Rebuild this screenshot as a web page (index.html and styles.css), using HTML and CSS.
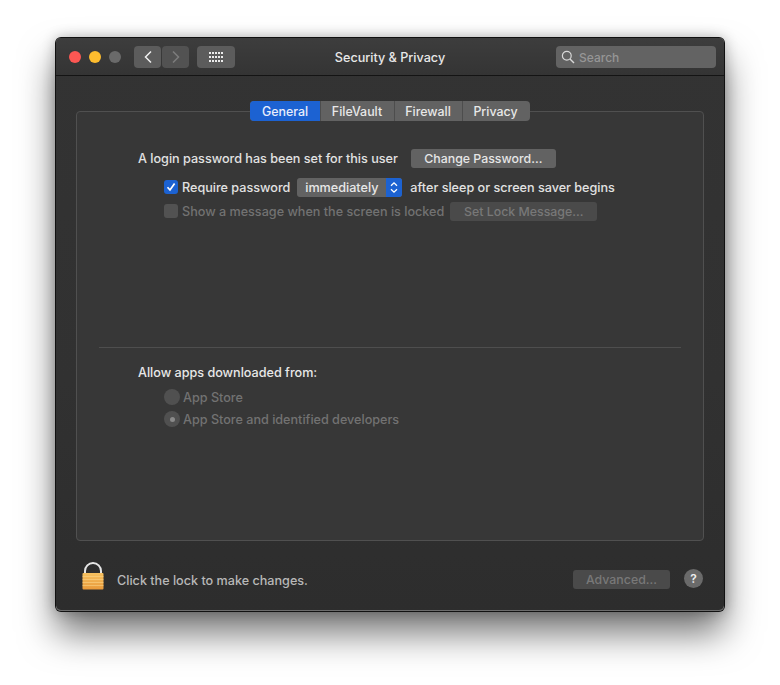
FILE: index.html
```html
<!DOCTYPE html>
<html lang="en">
<head>
<meta charset="utf-8">
<title>Security &amp; Privacy</title>
<link rel="stylesheet" href="styles.css">
</head>
<body>
<div class="window">
  <header class="titlebar">
    <div class="tools">
      <div class="lights"><span class="light red"></span><span class="light yellow"></span><span class="light grey"></span></div>
      <div class="nav">
        <span class="tool nav-btn"><svg width="10" height="14" viewBox="0 0 10 14"><path d="M8 1.5 2.5 7 8 12.5" fill="none" stroke="#f0f0f0" stroke-width="1.5"/></svg></span>
        <span class="tool nav-btn"><svg width="10" height="14" viewBox="0 0 10 14"><path d="M2 1.5 7.5 7 2 12.5" fill="none" stroke="#7d7d7d" stroke-width="1.5"/></svg></span>
      </div>
      <span class="tool grid-btn"><svg width="15" height="11" viewBox="0 0 15 11" fill="#ececec"><rect x="0" y="0" width="2" height="2"/><rect x="3" y="0" width="2" height="2"/><rect x="6" y="0" width="2" height="2"/><rect x="9" y="0" width="2" height="2"/><rect x="12" y="0" width="2" height="2"/><rect x="0" y="4" width="2" height="2"/><rect x="3" y="4" width="2" height="2"/><rect x="6" y="4" width="2" height="2"/><rect x="9" y="4" width="2" height="2"/><rect x="12" y="4" width="2" height="2"/><rect x="0" y="8" width="2" height="2"/><rect x="3" y="8" width="2" height="2"/><rect x="6" y="8" width="2" height="2"/><rect x="9" y="8" width="2" height="2"/><rect x="12" y="8" width="2" height="2"/></svg></span>
    </div>
    <h1 class="title">Security &amp; Privacy</h1>
    <div class="search"><svg width="14" height="14" viewBox="0 0 14 14"><circle cx="5.8" cy="5.8" r="4.4" fill="none" stroke="#d8d8d8" stroke-width="1.2"/><path d="M9 9l4 4" stroke="#d8d8d8" stroke-width="1.4"/></svg><span>Search</span></div>
  </header>

  <main class="content">
    <nav class="tabs">
      <span class="tab active">General</span>
      <span class="tab">FileVault</span>
      <span class="tab">Firewall</span>
      <span class="tab">Privacy</span>
    </nav>
    <section class="panel">
      <div class="upper">
        <div class="row row-login">
          <span class="label">A login password has been set for this user</span>
          <span class="btn btn-change">Change Password...</span>
        </div>
        <div class="row row-require">
          <span class="check on"><svg width="10" height="10" viewBox="0 0 10 10"><path d="M1.5 5.2 4 8 8.6 1.6" fill="none" stroke="#fff" stroke-width="1.7"/></svg></span>
          <span class="label">Require password</span>
          <span class="popup"><span class="popup-value">immediately</span><span class="popup-arrow"><svg width="8" height="13" viewBox="0 0 8 13"><path d="M1 4.8 4 1.8 7 4.8M1 8.2 4 11.2 7 8.2" fill="none" stroke="#fff" stroke-width="1.3"/></svg></span></span>
          <span class="label">after sleep or screen saver begins</span>
        </div>
        <div class="row row-message">
          <span class="check"></span>
          <span class="label dim">Show a message when the screen is locked</span>
          <span class="btn disabled btn-lockmsg">Set Lock Message...</span>
        </div>
      </div>
      <hr class="divider">
      <div class="lower">
        <div class="allow label">Allow apps downloaded from:</div>
        <div class="radio-row"><span class="radio"></span><span class="label dim">App Store</span></div>
        <div class="radio-row"><span class="radio sel"></span><span class="label dim">App Store and identified developers</span></div>
      </div>
    </section>
  </main>

  <footer class="footer">
    <svg class="lock" width="24" height="28" viewBox="0 0 24 28">
      <defs>
        <linearGradient id="lockbody" x1="0" y1="0" x2="0" y2="1"><stop offset="0" stop-color="#f6c160"/><stop offset="1" stop-color="#e8993a"/></linearGradient>
      </defs>
      <path d="M4 12V9a8 8 0 0 1 16 0v3" fill="none" stroke="#e6e6e6" stroke-width="2"/>
      <rect x="1.5" y="11" width="21" height="16.5" rx="1" fill="url(#lockbody)"/>
      <path d="M1.5 14.5h21M1.5 17.5h21M1.5 20.5h21M1.5 23.5h21" stroke="#fbd78d" stroke-width=".7" opacity=".8"/>
    </svg>
    <span class="lock-text">Click the lock to make changes.</span>
    <span class="btn disabled btn-advanced">Advanced...</span>
    <span class="help">?</span>
  </footer>
</div>
</body>
</html>
```
FILE: styles.css
```css
* { box-sizing: border-box; }
html, body { margin: 0; height: 100%; }
body {
  background: #fff;
  padding: 38px 56px 0;
  overflow: hidden;
  font-family: Inter, "Liberation Sans", sans-serif;
  font-size: 12.62px;
  font-weight: 500;
  color: #e2e2e2;
}
.window {
  width: 668px;
  height: 573px;
  display: flex;
  flex-direction: column;
  background: linear-gradient(#333, #313131 60%, #2d2d2d);
  border-radius: 5px;
  box-shadow: 0 0 0 1px #111, inset 0 -1px 0 #6c6c6c, 0 22px 36px rgba(0,0,0,.55), 0 0 14px rgba(0,0,0,.3);
  overflow: hidden;
}
.titlebar {
  height: 38px;
  flex: none;
  display: grid;
  grid-template-columns: 1fr auto 1fr;
  align-items: center;
  padding: 1px 8px 0;
  background: linear-gradient(#3d3d3d, #343434);
  border-bottom: 1px solid #141414;
}
.tools { display: flex; align-items: center; }
.lights { display: flex; gap: 8px; margin: 0 13px 0 5px; }
.light { width: 12px; height: 12px; border-radius: 50%; }
.red { background: #fc5753; }
.yellow { background: #fdbc2e; }
.grey { background: #6a6a6a; }
.nav { display: flex; gap: 1px; margin-right: 8px; }
.tool {
  height: 22px;
  background: #5c5c5c;
  border-radius: 4px;
  display: flex;
  align-items: center;
  justify-content: center;
}
.nav-btn { width: 27px; }
.nav-btn + .nav-btn { background: #525252; }
.grid-btn { width: 38px; }
.title {
  margin: 0;
  font-size: 12.62px;
  font-weight: 500;
  color: #e8e8e8;
}
.search {
  justify-self: end;
  width: 160px;
  height: 22px;
  border-radius: 4px;
  background: #636363;
  display: flex;
  align-items: center;
  gap: 4px;
  padding-left: 5px;
  color: #969696;
  font-size: 12px;
}
.content {
  flex: 1;
  padding: 25px 20px 0;
  display: flex;
  flex-direction: column;
  align-items: center;
}
.tabs {
  display: flex;
  height: 20px;
  margin-bottom: -10px;
  position: relative;
  z-index: 1;
  border-radius: 4px;
  overflow: hidden;
  background: #626262;
}
.tab {
  display: flex;
  align-items: center;
  justify-content: center;
  height: 100%;
  width: 68px;
  padding-right: 1px;
  font-size: 12.4px;
  color: #e8e8e8;
  border-left: 1px solid #4d4d4d;
}
.tab:first-child { border-left: 0; width: 70px; padding-right: 0; background: #1c62d2; color: #e9eefc; }
.tab:nth-child(2) { width: 74px; }
.tab:last-child { padding-right: 2px; }
.panel {
  width: 628px;
  height: 430px;
  background: #373737;
  border: 1px solid #505050;
  border-radius: 4px;
  padding: 0 22px;
}
.upper { padding: 36px 0 0 39px; height: 235px; }
.row { display: flex; align-items: center; }
.row-login { height: 20px; gap: 13px; }
.row-require { height: 20px; margin-top: 9px; padding-left: 26px; }
.row-message { height: 20px; margin-top: 4px; padding-left: 26px; }
.label { white-space: nowrap; }
.dim { color: #727272; }
.check {
  width: 14px;
  height: 14px;
  border-radius: 3px;
  background: #525252;
  margin-right: 4px;
  display: flex;
  align-items: center;
  justify-content: center;
}
.check.on { background: #1c62d2; }
.btn {
  display: flex;
  align-items: center;
  justify-content: center;
  height: 19px;
  border-radius: 3px;
  background: #626262;
  font-size: 12.35px;
  color: #e6e6e6;
}
.btn.disabled { background: #4a4a4a; color: #787878; }
.btn-change { width: 145px; }
.btn-lockmsg { width: 147px; margin-left: 6px; }
.popup {
  display: flex;
  height: 19px;
  width: 105px;
  margin: 0 8px 0 7px;
  border-radius: 3px;
  overflow: hidden;
  background: #626262;
}
.popup-value { flex: 1; display: flex; align-items: center; justify-content: center; color: #e8e8e8; }
.popup-arrow { width: 16px; background: #1c62d2; display: flex; align-items: center; justify-content: center; }
.divider { border: 0; height: 1px; background: #4e4e4e; margin: 0; }
.lower { padding: 14px 0 0 39px; }
.allow { color: #e8e8e8; height: 20px; display: flex; align-items: center; margin-bottom: 4px; }
.radio-row { height: 22px; display: flex; align-items: center; padding-left: 26px; gap: 3px; }
.radio {
  width: 16px;
  height: 16px;
  border-radius: 50%;
  background: #505050;
  display: flex;
  align-items: center;
  justify-content: center;
}
.radio.sel::after { content: ""; width: 5px; height: 5px; border-radius: 50%; background: #8a8a8a; }
.footer {
  height: 70px;
  flex: none;
  display: flex;
  align-items: center;
  padding: 7px 21px 0 25px;
}
.lock { flex: none; margin: -7px 12px 0 0; }
.lock-text { color: #b8b8b8; flex: 1; padding-top: 1px; }
.btn-advanced { width: 97px; margin-right: 14px; }
.help {
  width: 19px;
  height: 19px;
  margin-top: -2px;
  border-radius: 50%;
  background: #6a6a6a;
  color: #eee;
  font-size: 12px;
  font-weight: 600;
  display: flex;
  align-items: center;
  justify-content: center;
}
```
